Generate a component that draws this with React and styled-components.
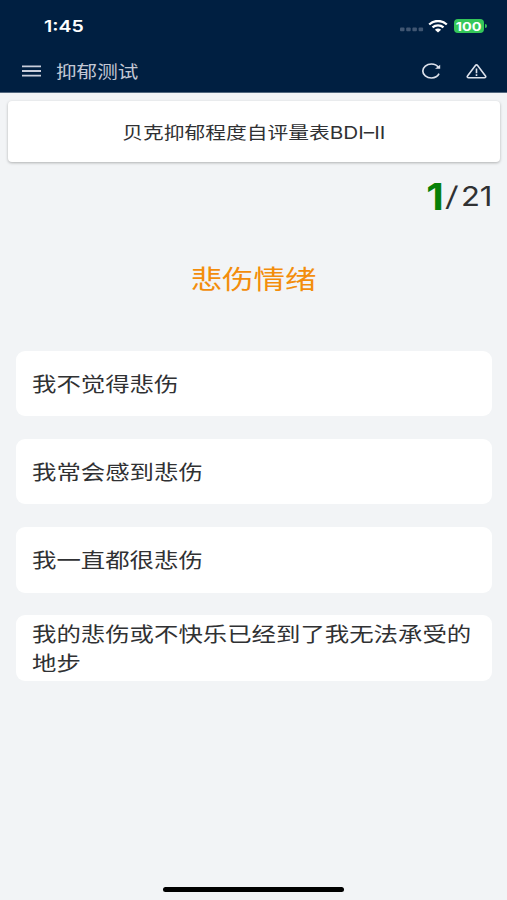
import React, { useState } from 'react'
import styled, { createGlobalStyle } from 'styled-components'

const GlobalStyle = createGlobalStyle`
  * {
    box-sizing: border-box;
  }

  body {
    margin: 0;
    background: #f2f4f6;
    font-family: Inter, 'Noto Sans CJK SC', sans-serif;
    color: #303133;
  }
`

const Root = styled.div`
  height: 900px;
  display: flex;
  flex-direction: column;
  overflow: hidden;
  background: #f2f4f6;
`

const Header = styled.header`
  height: 93px;
  flex: none;
  background: #001f41;
  border-bottom: 1px solid #53687f;
`

const StatusBar = styled.div`
  height: 52px;
  padding: 0 20px 0 44px;
  display: flex;
  align-items: center;
  justify-content: space-between;
`

const StatusIcons = styled.div`
  display: flex;
  align-items: center;
`

const NavBar = styled.nav`
  height: 38px;
  padding: 0 20px 0 22px;
  display: flex;
  align-items: center;
`

const NavTitle = styled.div`
  flex: 1;
  padding: 4px 0 0 14px;
`

const NavActions = styled.div`
  display: flex;
  align-items: center;
  gap: 25px;
`

// wide lettering, everything on the page is set with it
const WideText = styled.span`
  display: inline-block;
  white-space: nowrap;
  font-size: ${(props) => props.$size}px;
  font-weight: ${(props) => props.$weight || 400};
  line-height: ${(props) => props.$line || 1.4};
  color: ${(props) => props.$color || 'inherit'};
  transform: scaleX(${(props) => props.$scale || 1.22});
  transform-origin: ${(props) => props.$origin || 'left'} center;
`

const TitleCard = styled.div`
  flex: none;
  height: 61px;
  margin: 8px 7px 0 8px;
  padding-top: 4px;
  display: flex;
  align-items: center;
  justify-content: center;
  background: #fff;
  border-radius: 4px;
  box-shadow: 0 1px 3px rgba(0, 0, 0, 0.28);
`

const Counter = styled.div`
  flex: none;
  height: 68px;
  padding: 2px 15px 0 0;
  display: flex;
  align-items: center;
  justify-content: flex-end;
`

const CurrentNumber = styled.div`
  width: 20px;
  display: flex;
  justify-content: center;
`

const Slash = styled.div`
  width: 14px;
  display: flex;
  justify-content: center;
`

const TotalNumber = styled.div`
  width: 33px;
  display: flex;
  justify-content: flex-end;
`

const Question = styled.h1`
  flex: none;
  height: 120.6px;
  margin: 0;
  padding-top: 28px;
  text-align: center;
  font-weight: 400;
`

const Options = styled.div`
  flex: 1;
  padding: 0 15px 0 16px;
  display: flex;
  flex-direction: column;
  gap: 22.6px;
`

const Option = styled.button`
  flex: none;
  height: 65.6px;
  padding: 4px 16px 0;
  display: flex;
  align-items: center;
  border: none;
  border-radius: 9px;
  background: #fff;
  color: inherit;
  font-family: inherit;
  text-align: left;
`

const OptionText = styled.span`
  flex: none;
  width: 364px;
  font-size: 20px;
  line-height: 29px;
  transform: scaleX(1.22);
  transform-origin: left center;
`

const HomeIndicator = styled.div`
  flex: none;
  width: 181px;
  height: 5px;
  margin: 0 auto 8px 163px;
  border-radius: 3px;
  background: #000;
`

function MenuIcon() {
  return (
    <svg width="20" height="12" viewBox="0 0 20 12" stroke="#c9cedb" strokeWidth="1.8">
      <path d="M0 1.3h19M0 6h19M0 10.7h19" />
    </svg>
  )
}

function SignalIcon() {
  return (
    <svg width="24" height="12" viewBox="0 0 24 12" fill="#405672">
      <rect x="0" y="7.6" width="4.5" height="3.6" rx="1" />
      <rect x="6.2" y="7.6" width="4.5" height="3.6" rx="1" />
      <rect x="12.4" y="7.6" width="4.5" height="3.6" rx="1" />
      <rect x="18.6" y="7.6" width="4.5" height="3.6" rx="1" />
    </svg>
  )
}

function WifiIcon() {
  return (
    <svg width="20" height="13" viewBox="0 0 20 13" fill="none" stroke="#fff" strokeWidth="2.3">
      <path d="M1.2 4.5C6.2-.2 13.8-.2 18.8 4.5" />
      <path d="M4.5 7.4c3.1-2.8 7.9-2.8 11 0" />
      <path d="M6.9 9.7c1.8-1.5 4.4-1.5 6.2 0L10 12.6z" fill="#fff" stroke="none" />
    </svg>
  )
}

const Battery = styled.div`
  width: 30px;
  height: 14px;
  padding-top: 1px;
  display: flex;
  align-items: center;
  justify-content: center;
  border-radius: 4px;
  background: #35c759;
`

const BatteryCap = styled.div`
  width: 2px;
  height: 4px;
  margin-left: 1px;
  border-radius: 0 2px 2px 0;
  background: #35c759;
`

const WifiBox = styled.div`
  display: flex;
  margin: 0 6px 0 4px;
`

function RefreshIcon() {
  return (
    <svg width="20" height="16" viewBox="0 0 20 16" fill="none" stroke="#dce1eb" strokeWidth="1.7">
      <path d="M18 10.7C16.8 13.4 13.8 15 10.4 15 5.6 15 1.8 11.9 1.8 8S5.6 1 10.4 1c3.1 0 5.7 1.3 7.2 3.6" />
      <path d="M19.2 1.8v4H14z" fill="#dce1eb" stroke="none" />
    </svg>
  )
}

function WarningIcon() {
  return (
    <svg width="21" height="15" viewBox="0 0 21 15" fill="none" stroke="#dce1eb" strokeWidth="1.6">
      <path d="M9.4 1.4a1.4 1.4 0 0 1 2.2 0l7.9 10.5c.7.9.1 1.9-1.1 1.9H2.6c-1.2 0-1.8-1-1.1-1.9z" />
      <path d="M10.5 4.5v4.7M10.5 10.2v1.9" />
    </svg>
  )
}

const options = [
  '我不觉得悲伤',
  '我常会感到悲伤',
  '我一直都很悲伤',
  '我的悲伤或不快乐已经到了我无法承受的地步',
]

export default function App() {
  const [current, setCurrent] = useState(1)
  const total = 21

  function handleSelect() {
    setCurrent(Math.min(current + 1, total))
  }

  return (
    <>
      <GlobalStyle />
      <Root>
        <Header>
          <StatusBar>
            <WideText $size={16} $weight={600} $color="#fff" $scale={1.22}>
              1:45
            </WideText>
            <StatusIcons>
              <SignalIcon />
              <WifiBox>
                <WifiIcon />
              </WifiBox>
              <Battery>
                <WideText $size={12} $weight={700} $line="13px" $color="#fff" $scale={1.2} $origin="center">
                  100
                </WideText>
              </Battery>
              <BatteryCap />
            </StatusIcons>
          </StatusBar>
          <NavBar>
            <MenuIcon />
            <NavTitle>
              <WideText $size={17} $color="#c3c8d5" $scale={1.21}>
                抑郁测试
              </WideText>
            </NavTitle>
            <NavActions>
              <RefreshIcon />
              <WarningIcon />
            </NavActions>
          </NavBar>
        </Header>
        <TitleCard>
          <WideText $size={17} $origin="center">
            贝克抑郁程度自评量表BDI–II
          </WideText>
        </TitleCard>
        <Counter>
          <CurrentNumber>
            <WideText $size={37} $weight={700} $color="#078007" $scale={1.1} $origin="center">
              {current}
            </WideText>
          </CurrentNumber>
          <Slash>
            <WideText $size={27} $weight={300} $scale={1.55} $origin="center">
              /
            </WideText>
          </Slash>
          <TotalNumber>
            <WideText $size={27} $scale={1.15} $origin="right">
              {total}
            </WideText>
          </TotalNumber>
        </Counter>
        <Question>
          <WideText $size={25.8} $color="#f38d0b" $origin="center">
            悲伤情绪
          </WideText>
        </Question>
        <Options>
          {options.map((text) => (
            <Option key={text} onClick={handleSelect}>
              <OptionText>{text}</OptionText>
            </Option>
          ))}
        </Options>
        <HomeIndicator />
      </Root>
    </>
  )
}
